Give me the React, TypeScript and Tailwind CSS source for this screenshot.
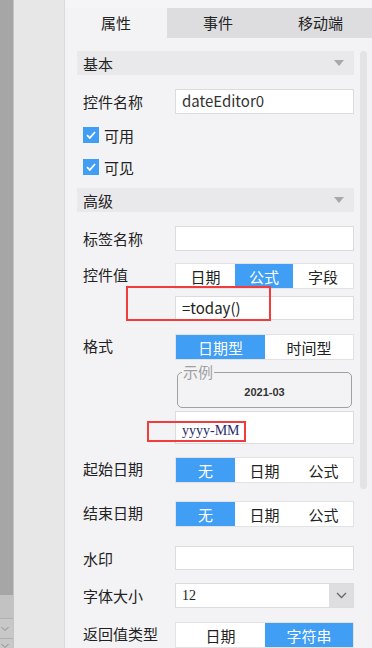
import React from 'react';

const BLUE = 'bg-[#409ef5]';

const Seg: React.FC<{ items: string[]; active: number; widths: string[] }> = ({ items, active, widths }) => (
  <div className="flex h-[26px] w-[179px] border border-[#e2e2e4] bg-white">
    {items.map((t, i) => (
      <div
        key={t}
        className={`${widths[i]} flex items-center justify-center text-[15px] leading-none ${
          i === active ? `${BLUE} text-white` : 'text-[#222]'
        }`}
      >
        {t}
      </div>
    ))}
  </div>
);

const TextInput: React.FC<{ value?: string; className?: string; h?: string }> = ({ value, className = '', h = 'h-[25px]' }) => (
  <div className={`${h} w-[179px] border border-[#dcdcde] bg-white flex items-center pl-[6px] ${className}`}>
    {value}
  </div>
);

const Header: React.FC<{ title: string; className?: string }> = ({ title, className = '' }) => (
  <div className={`h-[24px] shrink-0 bg-[#e9e9eb] flex items-center justify-between pl-[6px] pr-[10px] ${className}`}>
    <span className="text-[15px] text-[#222] leading-none">{title}</span>
    <svg width="10" height="6" viewBox="0 0 10 6">
      <path d="M0 0 H10 L5 6 Z" fill="#a8a8a8" />
    </svg>
  </div>
);

const Check: React.FC<{ label: string; className?: string }> = ({ label, className = '' }) => (
  <div className={`flex items-center h-[16px] shrink-0 pl-[6px] ${className}`}>
    <div className={`w-[16px] h-[16px] ${BLUE} flex items-center justify-center`}>
      <svg width="12" height="12" viewBox="0 0 12 12">
        <path d="M2 6.2 L4.8 9 L10 3" stroke="white" strokeWidth="1.8" fill="none" />
      </svg>
    </div>
    <span className="ml-[5px] text-[15px] text-[#222] leading-none">{label}</span>
  </div>
);

const Row: React.FC<{ label: string; className?: string; top?: boolean; children: React.ReactNode }> = ({
  label,
  className = '',
  top,
  children,
}) => (
  <div className={`flex shrink-0 ${top ? 'items-start' : 'items-center'} ${className}`}>
    <div className={`w-[98px] pl-[6px] text-[15px] text-[#222] leading-none ${top ? 'pt-[4px]' : ''}`}>{label}</div>
    <div className="flex flex-col">{children}</div>
  </div>
);

export default function App() {
  return (
    <div
      className="w-[372px] h-[648px] flex overflow-hidden bg-[#f3f3f5]"
      style={{ fontFamily: '"Noto Sans CJK SC", "Noto Sans", sans-serif' }}
    >
      {/* left rail */}
      <div className="w-[14px] shrink-0 flex flex-col border-r border-[#c4c4c4]">
        <div className="h-[595px] shrink-0 bg-[#a6a6a6]" />
        <div className="h-[24px] shrink-0 bg-[#c2c2c2] border-b border-[#b0b0b0]" />
        <div className="h-[20px] shrink-0 bg-[#c8c8c8] flex items-center pl-[1px] border-b border-[#b0b0b0]">
          <svg width="8" height="6" viewBox="0 0 8 6">
            <path d="M0.5 1 L4 4.5 L7.5 1" stroke="#8a8a8a" strokeWidth="1" fill="none" />
          </svg>
        </div>
        <div className="flex-1 bg-[#c8c8c8] pl-[1px] pt-[4px]">
          <svg width="8" height="6" viewBox="0 0 8 6">
            <path d="M0.5 1 L4 4.5 L7.5 1" stroke="#8a8a8a" strokeWidth="1" fill="none" />
          </svg>
        </div>
      </div>
      <div className="w-[51px] shrink-0 bg-[#e7e7e7] border-r border-[#dadada]" />

      {/* property panel */}
      <div className="flex-1 flex flex-col relative overflow-hidden">
        <div className="h-[8px] shrink-0 bg-[#f5f5f7]" />
        <div className="flex h-[30px] shrink-0 text-[15px] text-[#222]">
          <div className="w-[102px] bg-[#f3f3f5] flex items-center justify-center">属性</div>
          <div className="w-[102px] bg-[#dddde0] flex items-center justify-center">事件</div>
          <div className="flex-1 bg-[#dddde0] flex items-center justify-center">移动端</div>
        </div>

        <div className="flex shrink-0 pl-[12px] pt-[13px]">
          <div className="w-[277px] flex flex-col">
            <Header title="基本" />
            <Row label="控件名称" className="mt-[14px]">
              <TextInput
                value="dateEditor0"
                className="text-[15px] text-[#333]"
              />
            </Row>
            <Check label="可用" className="mt-[13px]" />
            <Check label="可见" className="mt-[16px]" />
            <Header title="高级" className="mt-[13px]" />
            <Row label="标签名称" className="mt-[14px]">
              <TextInput />
            </Row>
            <Row label="控件值" className="mt-[12px]" top>
              <Seg items={['日期', '公式', '字段']} active={1} widths={['w-[59px]', 'w-[58px]', 'flex-1']} />
              <TextInput value="=today()" className="mt-[7px] text-[15px] text-[#222]" h="h-[24px]" />
            </Row>
            <Row label="格式" className="mt-[14px]" top>
              <Seg items={['日期型', '时间型']} active={0} widths={['w-[89px]', 'flex-1']} />
              <fieldset className="mt-[5px] ml-[2px] w-[175px] h-[43px] border border-[#a0a0a0] rounded-[5px] px-[4px] pb-[4px]">
                <legend className="px-[1px] text-[15px] leading-[14px] text-[#a0a0a0]">示例</legend>
                <div
                  className="text-center text-[11px] font-bold text-[#333] mt-[5px]"
                  style={{ fontFamily: '"Liberation Sans", sans-serif' }}
                >
                  2021-03
                </div>
              </fieldset>
              <div
                className="mt-[3px] h-[33px] w-[179px] border border-[#dcdcde] bg-white flex items-end pb-[5px] pl-[6px] text-[14px] text-[#2a2a6a] leading-none"
                style={{ fontFamily: '"Liberation Serif", serif' }}
              >
                yyyy-MM
              </div>
            </Row>
            <Row label="起始日期" className="mt-[13px]" top>
              <Seg items={['无', '日期', '公式']} active={0} widths={['w-[59px]', 'w-[59px]', 'flex-1']} />
            </Row>
            <Row label="结束日期" className="mt-[18px]" top>
              <Seg items={['无', '日期', '公式']} active={0} widths={['w-[59px]', 'w-[59px]', 'flex-1']} />
            </Row>
            <Row label="水印" className="mt-[19px]">
              <TextInput h="h-[24px]" />
            </Row>
            <Row label="字体大小" className="mt-[13px]">
              <div className="h-[25px] w-[179px] border border-[#dcdcde] bg-white flex items-center">
                <span
                  className="flex-1 pl-[6px] text-[14px] text-[#222]"
                  style={{ fontFamily: '"Liberation Serif", serif' }}
                >
                  12
                </span>
                <div className="w-[24px] h-full bg-[#dedee0] flex items-center justify-center">
                  <svg width="11" height="7" viewBox="0 0 11 7">
                    <path d="M1 1 L5.5 5.5 L10 1" stroke="#666" strokeWidth="1.3" fill="none" />
                  </svg>
                </div>
              </div>
            </Row>
            <Row label="返回值类型" className="mt-[14px]" top>
              <Seg items={['日期', '字符串']} active={1} widths={['w-[89px]', 'flex-1']} />
            </Row>
          </div>
          <div className="ml-[6px] w-[7px] h-[438px] rounded-full bg-[#e3e3e5]" />
        </div>

        {/* annotation boxes */}
        <div className="absolute left-[61px] top-[286px] w-[145px] h-[35px] border-2 border-[#f23c3c]" />
        <div className="absolute left-[82px] top-[421px] w-[99px] h-[21px] border-2 border-[#f23c3c]" />
      </div>
    </div>
  );
}
